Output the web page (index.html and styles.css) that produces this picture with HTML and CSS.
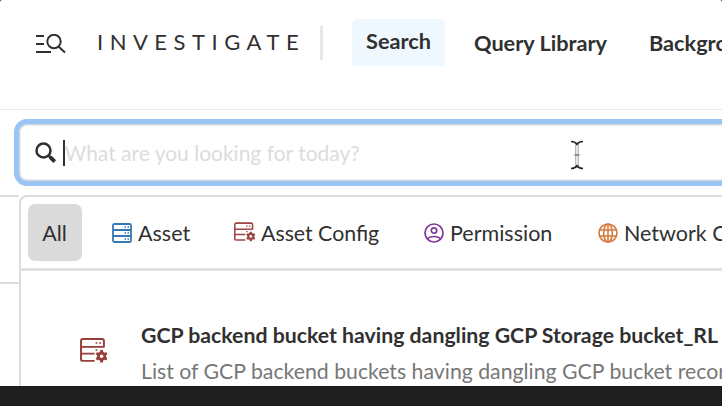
FILE: index.html
```html
<!DOCTYPE html>
<html lang="en">
<head>
<meta charset="utf-8">
<title>Investigate</title>
<link rel="stylesheet" href="styles.css">
</head>
<body>
<svg class="symbols" aria-hidden="true">
  <symbol id="server-config" viewBox="0 0 26 24">
    <g fill="none" stroke="currentColor" stroke-width="1.900">
      <path d="M23 9V2.600Q23 1 21.400 1H2.600Q1 1 1 2.600V20.400Q1 22 2.600 22H14M1 8.500H23M1 15H14"/>
      <path d="M15 4.800h1.700M18.500 4.800h1.700M15 11.500h1.700" stroke-width="1.500"/>
      <circle cx="20.800" cy="17.500" r="3.100" stroke-width="2.700"/>
      <path d="M20.800 11.600v2.500M20.800 21v2.500M15.700 14.600l2.200 1.300M23.700 19.200l2.200 1.300M15.700 20.500l2.200-1.300M23.700 15.900l2.200-1.300" stroke-width="2.700"/>
    </g>
  </symbol>
</svg>
<div class="window">
  <header class="header">
    <svg class="menu-icon" viewBox="0 0 30 20" fill="none" stroke="currentColor" stroke-width="2">
      <path d="M0 2h8M0 10h8M0 18h15M22.500 12.500L29 18.500"/>
      <circle cx="18" cy="7.500" r="6.700"/>
    </svg>
    <h1 class="brand">INVESTIGATE</h1>
    <span class="divider"></span>
    <nav class="nav">
      <a class="nav-item active">Search</a>
      <a class="nav-item library">Query Library</a>
      <a class="nav-item jobs">Background Jobs</a>
    </nav>
  </header>
  <main class="main">
    <div class="search">
      <svg class="search-icon" viewBox="0 0 22 22" fill="none" stroke="currentColor">
        <circle cx="8.500" cy="8.500" r="7" stroke-width="2.500"/>
        <path d="M13.500 13.500l2.500 2.500" stroke-width="2.500"/><path d="M15.200 15.200l4.500 4.500" stroke-width="4"/>
      </svg>
      <span class="caret"></span>
      <span class="placeholder">What are you looking for today?</span>
      <svg class="pointer" viewBox="0 0 14 30" fill="none">
        <path d="M7 4v22" stroke="#777" stroke-width="3"/>
        <path d="M7 4v22" stroke="#fff" stroke-width="1.600"/>
        <path d="M4.500 15h5" stroke="#777" stroke-width="1.500"/>
        <path d="M1 1.500Q5 1.500 7 4.300Q9 1.500 13 1.500M1 28.500Q5 28.500 7 25.700Q9 28.500 13 28.500" stroke="#222" stroke-width="1.700"/>
      </svg>
    </div>
    <div class="content">
      <aside class="side"></aside>
      <section class="results">
        <div class="tabs">
          <div class="tab all">All</div>
          <div class="tab asset">
            <svg class="icon server" viewBox="0 0 20 20" fill="none" stroke="currentColor" stroke-width="1.800">
              <rect x="1" y="1" width="18" height="18" rx="1.500"/>
              <path d="M1 7h18M1 13h18"/><path d="M12.500 4h1.500M15.500 4h1.500M12.500 10h1.500M15.500 10h1.500M12.500 16h1.500M15.500 16h1.500" stroke-width="1.300"/>
            </svg><span>Asset</span>
          </div>
          <div class="tab config"><svg class="icon config-icon"><use href="#server-config"/></svg><span>Asset Config</span></div>
          <div class="tab permission">
            <svg class="icon person" viewBox="0 0 20 20" fill="none" stroke="currentColor" stroke-width="1.700">
              <circle cx="10" cy="10" r="9"/><circle cx="10" cy="7.500" r="2.700"/>
              <path d="M3.500 16Q5 13.500 10 13.500T16.500 16"/>
            </svg><span>Permission</span>
          </div>
          <div class="tab network">
            <svg class="icon globe" viewBox="0 0 20 20" fill="none" stroke="currentColor" stroke-width="1.600">
              <circle cx="10" cy="10" r="9"/><ellipse cx="10" cy="10" rx="4.300" ry="9"/><path d="M10 1v18M1.500 7h17M1.500 13h17"/>
            </svg><span>Network Config</span>
          </div>
        </div>
        <article class="result">
          <svg class="result-icon"><use href="#server-config"/></svg>
          <div class="result-text">
            <h2 class="title">GCP backend bucket having dangling GCP Storage bucket_RL</h2>
            <p class="description">List of GCP backend buckets having dangling GCP bucket records</p>
          </div>
        </article>
      </section>
    </div>
  </main>
</div>
</body>
</html>
```
FILE: styles.css
```css
* { box-sizing: border-box; }
body {
  margin: 0;
  height: 406px;
  overflow: hidden;
  background: #1e1e1e;
  color: #303030;
  font: 22px/30px Lato, sans-serif;
  white-space: nowrap;
}
svg { display: block; flex: none; }
.symbols { position: absolute; width: 0; height: 0; }
.window {
  width: 722px;
  height: 386px;
  overflow: hidden;
  background: #fff;
  border-radius: 2px 2px 0 0;
}
.header {
  display: flex;
  height: 110px;
  padding-left: 36px;
  border-bottom: 1.5px solid #e8e8e8;
}
.menu-icon { width: 30px; height: 20px; margin-top: 34px; }
.brand {
  flex: none;
  width: 222px;
  margin: 27px 0 0 31px;
  font-size: 22px;
  font-weight: 400;
  letter-spacing: 6.5px;
}
.divider {
  flex: none;
  width: 3px;
  height: 34px;
  margin: 26px 0 0 1px;
  background: #e8e8e8;
}
.nav {
  display: flex;
  flex: none;
  margin-left: 29px;
  font-size: 21.7px;
  font-weight: 700;
}
.nav-item { flex: none; margin-top: 28px; }
.active {
  width: 93px;
  height: 47px;
  margin-top: 19px;
  padding-top: 7px;
  background: #f0f8ff;
  border-radius: 6px 6px 0 0;
  text-align: center;
}
.library { width: 175px; margin-left: 29px; }
.main { width: 760px; }
.search {
  display: flex;
  height: 67px;
  margin: 9px 0 9px 14px;
  padding-left: 16px;
  border: 5px solid #98c5f3;
  border-radius: 13px;
  box-shadow: inset 0 0 0 1.5px #d3d9e2;
}
.search-icon { width: 22px; height: 22px; margin-top: 18px; }
.caret { flex: none; width: 1.5px; height: 26px; margin: 16px 0 0 6px; background: #303030; }
.placeholder { flex: none; width: 505px; margin-top: 14px; color: #dcdcdc; font-size: 21px; }
.pointer { width: 14px; height: 30px; margin-top: 16px; }
.content { display: flex; }
.side {
  flex: none;
  width: 19px;
  height: 89px;
  border: solid #ddd;
  border-width: 2px 0;
}
.results {
  flex: none;
  width: 741px;
  height: 220px;
  border: 2px solid #ddd;
  border-radius: 8px 0 0 0;
}
.tabs {
  display: flex;
  height: 74px;
  padding: 7px 0 0 7px;
  border-bottom: 3px solid #e1e1e1;
}
.tab { display: flex; flex: none; height: 57px; align-items: center; font-size: 21.5px; }
.all { width: 54px; padding-right: 1px; justify-content: center; background: #dadada; border-radius: 7px; }
.icon { width: 20px; height: 20px; }
.tab span { margin-left: 6px; }
.asset { width: 122px; margin-left: 30px; }
.server { color: #3478b5; }
.config { width: 190px; font-size: 21.3px; }
.config-icon { width: 21px; margin-top: -2px; color: #9d4541; }
.permission { width: 174px; }
.person { color: #81389a; }
.globe { color: #d47a3c; }
.result { display: flex; padding: 49px 0 0 59px; }
.result-icon { width: 27px; height: 25px; margin-top: 18px; color: #963f3a; }
.result-text { margin-left: 34px; }
.title { margin: 0 0 6px; font-size: 21.25px; line-height: 30px; }
.description { margin: 0; color: #777; font-size: 21.25px; }
```
